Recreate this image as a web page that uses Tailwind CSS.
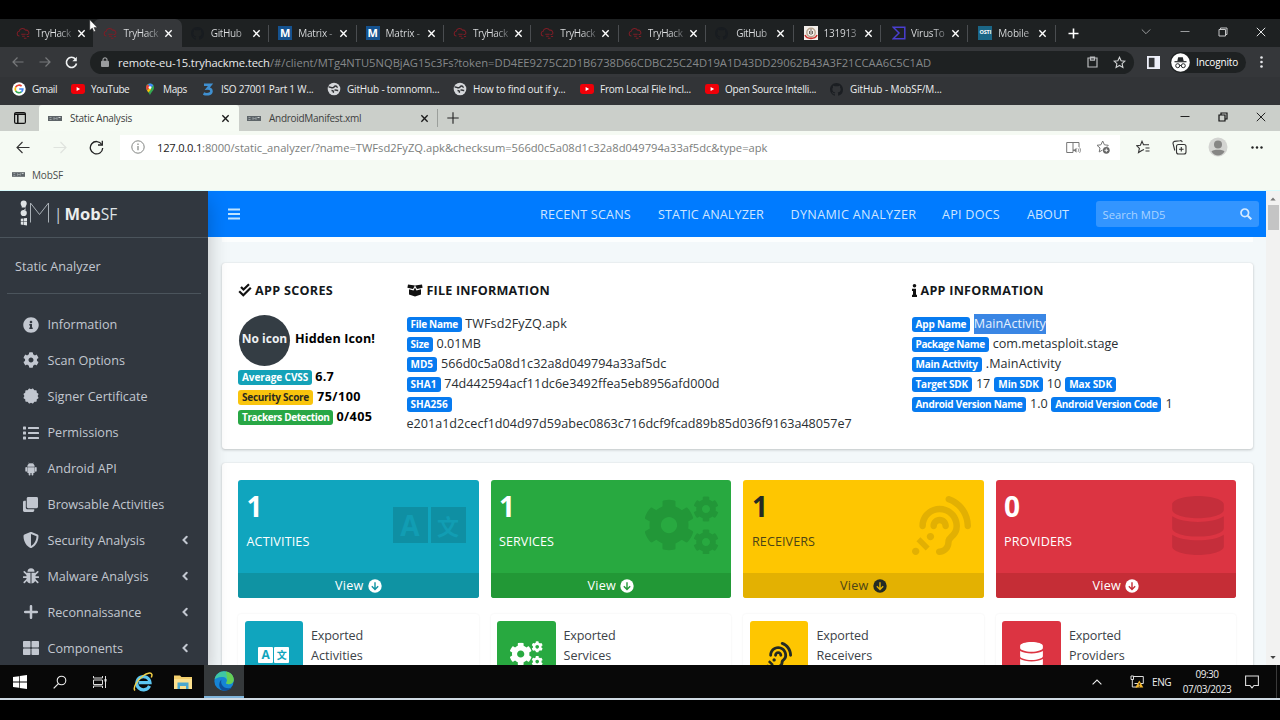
<!DOCTYPE html>
<html lang="en">
<head>
<meta charset="utf-8">
<title>Static Analysis</title>
<script src="https://cdn.jsdelivr.net/npm/@tailwindcss/browser@4"></script>
</head>
<body class="w-[1280px] h-[720px] overflow-hidden bg-black flex flex-col font-['Open_Sans','Noto_Sans',sans-serif] text-[12.6px] leading-[20px] whitespace-nowrap">
<svg class="hidden">
  <symbol id="thm" viewBox="0 0 16 14"><path d="M4 10.5H3.6A2.8 2.8 0 0 1 3.6 5 4 4 0 0 1 11 3.8a3.2 3.2 0 0 1 3.4 4.6M6 8.5h5M7 10.8h3M12 8.8h2M12.5 11h2.5M9 13h3" fill="none" stroke="#7d1d26" stroke-width="1.2"/></symbol>
  <symbol id="gh" viewBox="0 0 16 16"><path d="M8 0C3.58 0 0 3.58 0 8c0 3.54 2.29 6.53 5.47 7.59.4.07.55-.17.55-.38 0-.19-.01-.82-.01-1.49-2.01.37-2.53-.49-2.69-.94-.09-.23-.48-.94-.82-1.13-.28-.15-.68-.52-.01-.53.63-.01 1.08.58 1.23.82.72 1.21 1.87.87 2.33.66.07-.52.28-.87.51-1.07-1.78-.2-3.64-.89-3.64-3.95 0-.87.31-1.59.82-2.15-.08-.2-.36-1.02.08-2.12 0 0 .67-.21 2.2.82.64-.18 1.32-.27 2-.27s1.36.09 2 .27c1.53-1.04 2.2-.82 2.2-.82.44 1.1.16 1.92.08 2.12.51.56.82 1.27.82 2.15 0 3.07-1.87 3.75-3.65 3.95.29.25.54.73.54 1.48 0 1.07-.01 1.93-.01 2.2 0 .21.15.46.55.38A8.01 8.01 0 0 0 16 8c0-4.42-3.58-8-8-8z" fill="currentColor"/></symbol>
  <symbol id="x" viewBox="0 0 10 10"><path d="M1.5 1.5l7 7M8.5 1.5l-7 7" stroke="currentColor" stroke-width="1.5" fill="none"/></symbol>
  <symbol id="xthin" viewBox="0 0 10 10"><path d="M.8 .8l8.4 8.4M9.2 .8L.8 9.2" stroke="currentColor" stroke-width="1" fill="none"/></symbol>
  <symbol id="yt" viewBox="0 0 14 10"><rect width="14" height="10" rx="2.4" fill="#f00008"/><path d="M5.6 3l3.6 2-3.6 2z" fill="#fff"/></symbol>
  <symbol id="globe" viewBox="0 0 14 14"><circle cx="7" cy="7" r="6.3" fill="#d5d7da"/><path d="M1.5 5c1.500-.5 2.500.8 4 .8s1.500-1.600 3-1.800 1 1.400 2.200 1.200M7.500 8.200c1.300-.4 2.300.2 3.700.2M4.500 8.500c1.500 0 2.300.8 1.800 2.300" fill="none" stroke="#323437" stroke-width="1.500"/></symbol>
  <symbol id="msf" viewBox="0 0 14 5"><rect width="14" height="5" fill="#5d6468"/><path d="M1.500 1.500h2M1.500 3.500h2M6 3.800V1.500l1.500 1.500 1.500-1.500v2.300" stroke="#a9b0b2" stroke-width=".8" fill="none"/><path d="M10.500 1.500h2" stroke="#dfe4e4" stroke-width=".9"/></symbol>
  <symbol id="info" viewBox="0 0 512 512"><path fill="currentColor" d="M256 8C119.043 8 8 119.083 8 256c0 136.997 111.043 248 248 248s248-111.003 248-248C504 119.083 392.957 8 256 8zm0 110c23.196 0 42 18.804 42 42s-18.804 42-42 42-42-18.804-42-42 18.804-42 42-42zm56 254c0 6.627-5.373 12-12 12h-88c-6.627 0-12-5.373-12-12v-24c0-6.627 5.373-12 12-12h12v-64h-12c-6.627 0-12-5.373-12-12v-24c0-6.627 5.373-12 12-12h64c6.627 0 12 5.373 12 12v100h12c6.627 0 12 5.373 12 12v24z"/></symbol>
  <symbol id="cog" viewBox="0 0 512 512"><path fill="currentColor" d="M487.4 315.7l-42.6-24.6c4.3-23.2 4.3-47 0-70.2l42.6-24.6c4.9-2.8 7.1-8.6 5.5-14-11.1-35.6-30-67.8-54.7-94.6-3.8-4.1-10-5.1-14.8-2.3L380.8 110c-17.9-15.4-38.5-27.3-60.8-35.1V25.8c0-5.6-3.9-10.5-9.4-11.7-36.7-8.2-74.3-7.8-109.2 0-5.5 1.2-9.4 6.1-9.4 11.7V75c-22.2 7.9-42.8 19.8-60.8 35.1L88.7 85.500c-4.9-2.8-11-1.9-14.8 2.3-24.7 26.7-43.6 58.9-54.7 94.6-1.7 5.4.6 11.2 5.5 14L67.3 221c-4.3 23.2-4.3 47 0 70.2l-42.6 24.6c-4.9 2.8-7.1 8.600-5.500 14 11.1 35.6 30 67.8 54.7 94.6 3.8 4.1 10 5.1 14.8 2.3l42.6-24.6c17.9 15.4 38.5 27.3 60.8 35.1v49.2c0 5.6 3.9 10.5 9.4 11.7 36.7 8.2 74.3 7.8 109.2 0 5.500-1.2 9.400-6.1 9.400-11.700v-49.200c22.200-7.900 42.800-19.800 60.800-35.100l42.600 24.600c4.900 2.800 11 1.900 14.800-2.300 24.700-26.700 43.600-58.900 54.700-94.600 1.500-5.500-.7-11.300-5.600-14.100zM256 336c-44.100 0-80-35.900-80-80s35.900-80 80-80 80 35.900 80 80-35.900 80-80 80z"/></symbol>
  <symbol id="cert" viewBox="0 0 16 16"><g fill="currentColor"><rect x="2.300" y="2.300" width="11.400" height="11.400" rx=".8"/><rect x="2.300" y="2.300" width="11.400" height="11.400" rx=".8" transform="rotate(30 8 8)"/><rect x="2.300" y="2.300" width="11.400" height="11.400" rx=".8" transform="rotate(60 8 8)"/></g></symbol>
  <symbol id="list" viewBox="0 0 16 14"><g fill="currentColor"><rect y=".5" width="3" height="3" rx=".6"/><rect y="5.500" width="3" height="3" rx=".6"/><rect y="10.500" width="3" height="3" rx=".6"/><rect x="5" y="1" width="11" height="2" rx=".5"/><rect x="5" y="6" width="11" height="2" rx=".5"/><rect x="5" y="11" width="11" height="2" rx=".5"/></g></symbol>
  <symbol id="android" viewBox="0 0 14 16"><g fill="currentColor"><path d="M2.800 5.500a4.200 4.200 0 0 1 8.400 0z"/><path d="M2.800 5.900h8.400v5.800a1 1 0 0 1-1 1H3.800a1 1 0 0 1-1-1z"/><rect x=".5" y="5.800" width="2" height="5.200" rx="1"/><rect x="11.500" y="5.800" width="2" height="5.200" rx="1"/><rect x="4.300" y="11" width="2.100" height="4.400" rx="1"/><rect x="7.600" y="11" width="2.100" height="4.400" rx="1"/></g><path d="M4.300 .8l1 1.600M9.700 .8l-1 1.600" stroke="currentColor" stroke-width=".6"/></symbol>
  <symbol id="clone" viewBox="0 0 16 16"><g fill="currentColor"><rect x="4" y="0" width="12" height="12" rx="1.500"/><path d="M3 4H1.500A1.500 1.500 0 0 0 0 5.500v9A1.500 1.500 0 0 0 1.500 16h9a1.500 1.500 0 0 0 1.500-1.500V13H4.500A1.500 1.500 0 0 1 3 11.500z"/></g></symbol>
  <symbol id="shield" viewBox="0 0 512 512"><path fill="currentColor" d="M466.500 83.700l-192-80a48.150 48.150 0 0 0-36.900 0l-192 80C27.700 91.100 16 108.600 16 128c0 198.500 114.500 335.700 221.500 380.300 11.800 4.900 25.100 4.900 36.900 0C360.100 472.600 496 349.300 496 128c0-19.400-11.700-36.900-29.500-44.300zM256.100 446.300l-.1-381 175.900 73.300c-3.300 151.400-82.100 261.100-175.800 307.700z"/></symbol>
  <symbol id="bug" viewBox="0 0 16 16"><g fill="currentColor"><path d="M4.500 3.700a3.500 3.500 0 0 1 7 0z"/><path d="M3.500 4.700h4v10.800C4.800 15.300 3.500 13 3.500 11zM12.500 4.700h-4v10.800c2.700-.2 4-2.500 4-4.500z"/></g><path d="M4 6.500L1.300 3.800M12 6.500l2.700-2.700M.6 9.200h4M11.400 9.200h4M4.200 11.500l-2.900 2.800M11.800 11.500l2.900 2.800" stroke="currentColor" stroke-width="1.700" stroke-linecap="round"/></symbol>
  <symbol id="plus" viewBox="0 0 14 14"><path d="M7 1.200v11.600M1.200 7h11.600" stroke="currentColor" stroke-width="2.500" stroke-linecap="round"/></symbol>
  <symbol id="thl" viewBox="0 0 16 14"><g fill="currentColor"><rect width="7.500" height="6.500" rx=".8"/><rect x="8.500" width="7.500" height="6.500" rx=".8"/><rect y="7.500" width="7.500" height="6.500" rx=".8"/><rect x="8.500" y="7.500" width="7.500" height="6.500" rx=".8"/></g></symbol>
  <symbol id="chev" viewBox="0 0 6 10"><path d="M4.700 1.700L1.500 5l3.200 3.300" stroke="currentColor" stroke-width="2" fill="none" stroke-linecap="round"/></symbol>
  <symbol id="db" viewBox="0 0 448 512"><path fill="currentColor" d="M448 73.143v45.714C448 159.143 347.667 192 224 192S0 159.143 0 118.857V73.143C0 32.857 100.333 0 224 0s224 32.857 224 73.143zM448 176v102.857C448 319.143 347.667 352 224 352S0 319.143 0 278.857V176c48.125 33.143 136.208 48.572 224 48.572S399.874 209.143 448 176zm0 160v102.857C448 479.143 347.667 512 224 512S0 479.143 0 438.857V336c48.125 33.143 136.208 48.572 224 48.572S399.874 369.143 448 336z"/></symbol>
  <symbol id="ear" viewBox="0 0 512 512"><path fill="currentColor" d="M216 260c0 15.464-12.536 28-28 28s-28-12.536-28-28c0-44.112 35.888-80 80-80s80 35.888 80 80c0 15.464-12.536 28-28 28s-28-12.536-28-28c0-13.234-10.767-24-24-24s-24 10.766-24 24zm24-176c-97.047 0-176 78.951-176 176 0 15.464 12.536 28 28 28s28-12.536 28-28c0-66.168 53.832-120 120-120s120 53.832 120 120c0 75.164-71.009 70.311-71.997 143.622L288 404c0 28.673-23.327 52-52 52-15.464 0-28 12.536-28 28s12.536 28 28 28c59.475 0 107.876-48.328 108-107.774.595-34.428 72-48.240 72-144.226 0-97.049-78.952-176-176-176zm-80 236c-17.673 0-32 14.327-32 32s14.327 32 32 32 32-14.327 32-32-14.327-32-32-32zM32 448c-17.673 0-32 14.327-32 32s14.327 32 32 32 32-14.327 32-32-14.327-32-32-32zm480-187.993c0-1.518-.012-3.025-.045-4.531C510.076 140.525 436.157 38.470 327.994 1.511c-14.633-4.998-30.553 2.809-35.552 17.443-5 14.632 2.810 30.550 17.443 35.550C394.997 84.600 454.508 165.500 455.960 256.400c.027 1.202.040 2.404.040 3.607 0 15.464 12.536 28 28 28s28-12.536 28-28zM152.971 439.029l-80-80L39.030 392.970l80 80 33.941-33.941z"/></symbol>
  <symbol id="cogs" viewBox="0 0 74 58"><use href="#cog" x="-2" y="3" width="52" height="52"/><use href="#cog" x="48" y="0" width="26" height="26"/><use href="#cog" x="48" y="33" width="26" height="26"/></symbol>
</svg>

<div class="h-[19px] shrink-0"></div>

<!-- Chrome tab strip -->
<header class="h-[28px] shrink-0 bg-[#1e2122] flex items-stretch pl-[7px] text-[#d6d8da] text-[10px] tracking-[-0.4px] leading-[27px]">
  <div class="w-[86.400px] flex items-center pl-[9px]"><svg class="size-[14px]"><use href="#thm"/></svg><span class="w-[37px] ml-[6px] bg-gradient-to-r from-[#dfe1e3] from-60% to-[#4a4d50] bg-clip-text text-transparent">TryHack</span><svg class="size-[9px] ml-[4px] text-white"><use href="#x"/></svg></div>
  <div class="w-[88.400px] flex items-center pl-[10px] bg-[#35373a] rounded-t-[7px]"><svg class="size-[14px]"><use href="#thm"/></svg><span class="w-[37px] ml-[6px] bg-gradient-to-r from-[#dfe1e3] from-60% to-[#5a5d60] bg-clip-text text-transparent">TryHack</span><svg class="size-[9px] ml-[4px] text-white"><use href="#x"/></svg></div>
  <div class="w-[87.400px] flex items-center pl-[9px]"><svg class="size-[13px] mr-px text-[#181c20]"><use href="#gh"/></svg><span class="w-[37px] ml-[6px] bg-gradient-to-r from-[#dfe1e3] from-60% to-[#6e7072] bg-clip-text text-transparent">GitHub</span><svg class="size-[9px] ml-[4px] text-white"><use href="#x"/></svg><i class="ml-auto w-px h-[17px] bg-[#4a4d50]"></i></div>
  <div class="w-[87.400px] flex items-center pl-[9px]"><b class="size-[14px] bg-[#15528f] text-white text-[11px] leading-[14px] text-center tracking-normal">M</b><span class="w-[37px] ml-[6px] tracking-[-0.200px] bg-gradient-to-r from-[#dfe1e3] from-75% to-[#4a4d50] bg-clip-text text-transparent">Matrix -</span><svg class="size-[9px] ml-[4px] text-white"><use href="#x"/></svg><i class="ml-auto w-px h-[17px] bg-[#4a4d50]"></i></div>
  <div class="w-[87.400px] flex items-center pl-[9px]"><b class="size-[14px] bg-[#15528f] text-white text-[11px] leading-[14px] text-center tracking-normal">M</b><span class="w-[37px] ml-[6px] tracking-[-0.200px] bg-gradient-to-r from-[#dfe1e3] from-75% to-[#4a4d50] bg-clip-text text-transparent">Matrix -</span><svg class="size-[9px] ml-[4px] text-white"><use href="#x"/></svg><i class="ml-auto w-px h-[17px] bg-[#4a4d50]"></i></div>
  <div class="w-[87.400px] flex items-center pl-[9px]"><svg class="size-[14px]"><use href="#thm"/></svg><span class="w-[37px] ml-[6px] bg-gradient-to-r from-[#dfe1e3] from-60% to-[#4a4d50] bg-clip-text text-transparent">TryHack</span><svg class="size-[9px] ml-[4px] text-white"><use href="#x"/></svg><i class="ml-auto w-px h-[17px] bg-[#4a4d50]"></i></div>
  <div class="w-[87.400px] flex items-center pl-[9px]"><svg class="size-[14px]"><use href="#thm"/></svg><span class="w-[37px] ml-[6px] bg-gradient-to-r from-[#dfe1e3] from-60% to-[#4a4d50] bg-clip-text text-transparent">TryHack</span><svg class="size-[9px] ml-[4px] text-white"><use href="#x"/></svg><i class="ml-auto w-px h-[17px] bg-[#4a4d50]"></i></div>
  <div class="w-[87.400px] flex items-center pl-[9px]"><svg class="size-[14px]"><use href="#thm"/></svg><span class="w-[37px] ml-[6px] bg-gradient-to-r from-[#dfe1e3] from-60% to-[#4a4d50] bg-clip-text text-transparent">TryHack</span><svg class="size-[9px] ml-[4px] text-white"><use href="#x"/></svg><i class="ml-auto w-px h-[17px] bg-[#4a4d50]"></i></div>
  <div class="w-[87.400px] flex items-center pl-[9px]"><svg class="size-[13px] mr-px text-[#181c20]"><use href="#gh"/></svg><span class="w-[37px] ml-[7px] bg-gradient-to-r from-[#dfe1e3] from-60% to-[#6e7072] bg-clip-text text-transparent">GitHub</span><svg class="size-[9px] ml-[3px] text-white"><use href="#x"/></svg><i class="ml-auto w-px h-[17px] bg-[#4a4d50]"></i></div>
  <div class="w-[87.400px] flex items-center pl-[10px]"><svg class="size-[14px]" viewBox="0 0 14 14"><rect width="14" height="14" fill="#f3eeea"/><circle cx="7" cy="6.500" r="4.200" fill="none" stroke="#b8a58f" stroke-width="1.400"/><path d="M7 3v6M5.500 5v3M8.500 5v3" stroke="#6d665f"/><path d="M1 9c2 4.500 10 4.500 12 0" fill="none" stroke="#c8322e" stroke-width="1.600"/></svg><span class="w-[37px] ml-[6px] tracking-[-0.250px] bg-gradient-to-r from-[#dfe1e3] from-60% to-[#4a4d50] bg-clip-text text-transparent">131913</span><svg class="size-[9px] ml-[3px] text-white"><use href="#x"/></svg><i class="ml-auto w-px h-[17px] bg-[#4a4d50]"></i></div>
  <div class="w-[87.400px] flex items-center pl-[11px]"><svg class="size-[14px]" viewBox="0 0 14 14"><path d="M1.200 1.200h11.600v11.600H1.200L7 7z" fill="none" stroke="#4a3fd0" stroke-width="1.500"/></svg><span class="w-[37px] ml-[5px] tracking-[-0.200px] bg-gradient-to-r from-[#dfe1e3] from-60% to-[#4a4d50] bg-clip-text text-transparent">VirusTo</span><svg class="size-[9px] ml-[3px] text-white"><use href="#x"/></svg><i class="ml-auto w-px h-[17px] bg-[#4a4d50]"></i></div>
  <div class="w-[87.400px] flex items-center pl-[10px]"><b class="size-[14px] bg-[#1b6686] text-white text-[5.500px] leading-[13px] text-center tracking-[-0.200px]">OSTI</b><span class="w-[37px] ml-[6px] tracking-[-0.200px] bg-gradient-to-r from-[#dfe1e3] from-60% to-[#77797b] bg-clip-text text-transparent">Mobile</span><svg class="size-[9px] ml-[3px] text-white"><use href="#x"/></svg><i class="ml-auto w-px h-[17px] bg-[#4a4d50]"></i></div>
  <svg class="size-[11px] ml-[12.500px] mt-[8.500px]" viewBox="0 0 11 11"><path d="M5.500 .5v10M.5 5.500h10" stroke="#fff" stroke-width="1.600"/></svg>
  <div class="ml-auto flex pt-[8px] pr-[14px] text-[#e2e4e5]">
    <svg class="w-[10px] h-[9px]" viewBox="0 0 10 9"><path d="M.8 2.500L5 6.700l4.200-4.200" fill="none" stroke="#9a9c9e"/></svg>
    <svg class="w-[10px] h-[9px] ml-[29px]" viewBox="0 0 10 9"><path d="M.5 4.500h9" stroke="#9a9c9e"/></svg>
    <svg class="size-[10px] ml-[28px]" viewBox="0 0 10 10"><path d="M1 2.500h6.500v6.500H1zM2.500 2.500V1H9v6.500H7.500" fill="none" stroke="#c5c7c8"/></svg>
    <svg class="size-[10px] ml-[28px]"><use href="#xthin"/></svg>
  </div>
</header>

<!-- Chrome toolbar -->
<div class="h-[30px] shrink-0 bg-[#35373a] flex items-center">
  <svg class="w-[12px] h-[12px] ml-[12px]" viewBox="0 0 12 12"><path d="M11.500 6H1.200M5.500 1.500L1 6l4.500 4.500" fill="none" stroke="#77797b" stroke-width="1.200"/></svg>
  <svg class="w-[12px] h-[12px] ml-[15px]" viewBox="0 0 12 12"><path d="M.5 6h10.300M6.500 1.500L11 6l-4.500 4.500" fill="none" stroke="#77797b" stroke-width="1.200"/></svg>
  <svg class="size-[13px] ml-[14px]" viewBox="0 0 13 13"><path d="M10.500 3.200A5.100 5.100 0 1 0 11.500 7.500" fill="none" stroke="#f1f3f4" stroke-width="1.600"/><path d="M11.800 .8v4.400H7.400z" fill="#f1f3f4"/></svg>
  <div class="ml-[12px] w-[1044px] h-[23px] rounded-full bg-[#1e2122] flex items-center pl-[11px] text-[11.200px] leading-[23px] text-[#85888a]">
    <svg class="w-[8px] h-[10px]" viewBox="0 0 8 10"><rect y="3.800" width="8" height="6.200" rx="1" fill="#9a9c9e"/><path d="M2 4V2.800a2 2 0 0 1 4 0V4" fill="none" stroke="#9a9c9e" stroke-width="1.200"/></svg>
    <span class="ml-[9px] w-[152px] tracking-[-0.110px] text-[#e9eaeb]">remote-eu-15.tryhackme.tech</span><span>/#/client/MTg4NTU5NQBjAG15c3Fs?token=DD4EE9275C2D1B6738D66CDBC25C24D19A1D43DD29062B43A3F21CCAA6C5C1AD</span>
    <svg class="ml-auto w-[11px] h-[12px]" viewBox="0 0 11 12"><path d="M1 2h9v9H1zM3.500 4.200h4V1.200h-4z" fill="none" stroke="#b9bbbd" stroke-width="1.200"/></svg>
    <svg class="ml-[15px] mr-[8px] size-[13px]" viewBox="0 0 13 13"><path d="M6.500 1.200l1.600 3.500 3.800.4-2.800 2.600.8 3.800-3.400-2-3.400 2 .8-3.800L1.100 5.100l3.800-.4z" fill="none" stroke="#d2d4d5" stroke-width="1.100"/></svg>
  </div>
  <svg class="ml-[13px] size-[13px]" viewBox="0 0 13 13"><rect x=".9" y=".9" width="11.200" height="11.200" fill="#35373a" stroke="#eef0fa" stroke-width="1.800"/><rect x="7.500" y="1" width="5" height="11" fill="#eef0fa"/></svg>
  <div class="ml-[10px] w-[76px] h-[21px] rounded-full bg-[#1e2122] flex items-center text-[10px] leading-[20px] tracking-[-0.150px] text-white">
    <svg class="size-[19px] ml-[1px]" viewBox="0 0 19 19"><circle cx="9.500" cy="9.500" r="9.300" fill="#fff"/><path d="M6.300 8l.9-3.800h4.600l.9 3.800z" fill="#25282a"/><path d="M3.500 8.700h12" stroke="#25282a" stroke-width="1.200"/><circle cx="6.700" cy="12.700" r="2" fill="none" stroke="#25282a"/><circle cx="12.300" cy="12.700" r="2" fill="none" stroke="#25282a"/><path d="M8.500 12.500h2" stroke="#25282a"/></svg>
    <span class="ml-[6px]">Incognito</span>
  </div>
  <svg class="ml-[14px] w-[3px] h-[12px]" viewBox="0 0 3 12"><g fill="#e8eaed"><circle cx="1.500" cy="1.500" r="1.300"/><circle cx="1.500" cy="6" r="1.300"/><circle cx="1.500" cy="10.500" r="1.300"/></g></svg>
</div>

<!-- Chrome bookmarks -->
<div class="h-[28px] shrink-0 bg-[#323437] text-[10px] leading-[26px] tracking-[-0.170px] text-[#eceeef] pl-[12px] flex items-center pb-[4px]">
  <div class="w-[59px] flex items-center gap-[6px]"><svg class="size-[14px]" viewBox="0 0 14 14"><circle cx="7" cy="7" r="6.700" fill="#fff"/><g fill="none" stroke-width="1.700"><path d="M9.600 4.200A3.800 3.800 0 0 0 3.700 5.200" stroke="#ea4335"/><path d="M3.700 5.200a3.800 3.800 0 0 0 0 3.600" stroke="#fbbc05"/><path d="M3.700 8.800a3.800 3.800 0 0 0 5.700 1.100" stroke="#34a853"/><path d="M9.400 9.900A3.800 3.800 0 0 0 10.800 7H7.200" stroke="#4285f4"/></g></svg><span class="tracking-[-0.420px]">Gmail</span></div>
  <div class="w-[72px] flex items-center gap-[6px]"><svg class="w-[14px] h-[10px]"><use href="#yt"/></svg><span class="tracking-[-0.400px]">YouTube</span></div>
  <div class="w-[58px] flex items-center gap-[6px]"><svg class="w-[14px] h-[13px]" viewBox="0 0 14 13"><path d="M7 12.500C6.400 9.500 3 8 3 4.600a4 4 0 0 1 8 0C11 8 7.600 9.500 7 12.500z" fill="#34a853"/><path d="M3 4.600A4 4 0 0 1 5.200 1L7 4.600 4 7.500C3.400 6.600 3 5.700 3 4.600z" fill="#ea4335"/><path d="M5 1.200A4 4 0 0 1 10.300 2.400L7.600 5z" fill="#4285f4"/><path d="M4 7.500l3.400-3 .6 2L5.400 9.600z" fill="#fbbc05"/><circle cx="7" cy="4.600" r="1.400" fill="#fff"/></svg><span class="tracking-[-0.350px]">Maps</span></div>
  <div class="w-[126px] flex items-center gap-[6px]"><svg class="w-[14px] h-[13px]" viewBox="0 0 14 13"><path d="M3 1.700h6.500L6.500 5.500C9.300 5.300 10.700 6.800 10.400 8.700 10 11.300 5.500 12 2.500 10.500" fill="none" stroke="#3f8fd0" stroke-width="2.600"/></svg><span class="tracking-[-0.220px]">ISO 27001 Part 1 W...</span></div>
  <div class="w-[126px] flex items-center gap-[6px]"><svg class="size-[14px]"><use href="#globe"/></svg><span>GitHub - tomnomn...</span></div>
  <div class="w-[127px] flex items-center gap-[6px]"><svg class="size-[14px]"><use href="#globe"/></svg><span>How to find out if y...</span></div>
  <div class="w-[125px] flex items-center gap-[6px]"><svg class="w-[14px] h-[10px]"><use href="#yt"/></svg><span class="tracking-[-0.240px]">From Local File Incl...</span></div>
  <div class="w-[125px] flex items-center gap-[6px]"><svg class="w-[14px] h-[10px]"><use href="#yt"/></svg><span class="tracking-[-0.240px]">Open Source Intelli...</span></div>
  <div class="flex items-center gap-[6px]"><svg class="size-[13px] mr-px text-[#1b1e22]"><use href="#gh"/></svg><span class="tracking-[-0.100px]">GitHub - MobSF/M...</span></div>
</div>

<!-- Edge tab strip -->
<div class="h-[26px] shrink-0 bg-[#cbcfca] flex text-[10px] leading-[26px] text-[#3d403e]">
  <div class="w-[39px] flex items-center justify-center"><svg class="size-[12px]" viewBox="0 0 12 12"><rect x=".6" y=".6" width="10.800" height="10.800" rx="1.500" fill="none" stroke="#111" stroke-width="1.200"/><path d="M.6 2.200h10.800M3.800 3v8.500" stroke="#111" stroke-width="1.500"/></svg></div>
  <div class="w-[200px] bg-[#f6fbf4] rounded-t-[3px] flex items-center pl-[9px] pr-[9px]"><svg class="w-[14px] h-[5px]"><use href="#msf"/></svg><span class="ml-[8px] tracking-[-0.250px]">Static Analysis</span><svg class="size-[9px] ml-auto text-[#1a1a1a]"><use href="#x"/></svg></div>
  <div class="w-[199px] flex items-center pl-[8px] pr-[8px] border-r border-[#9b9f9b] my-[4px] leading-[18px]"><svg class="w-[14px] h-[5px]"><use href="#msf"/></svg><span class="ml-[8px] tracking-[-0.280px]">AndroidManifest.xml</span><svg class="size-[9px] ml-auto text-[#1a1a1a]"><use href="#x"/></svg></div>
  <svg class="size-[12px] ml-[9px] mt-[7px]" viewBox="0 0 12 12"><path d="M6 .3v11.400M.3 6h11.400" stroke="#222" stroke-width="1.100"/></svg>
  <div class="ml-auto flex pt-[7px] pr-[14px] text-[#222]">
    <svg class="w-[10px] h-[9px]" viewBox="0 0 10 9"><path d="M.5 4.500h9" stroke="#222"/></svg>
    <svg class="size-[10px] ml-[28px]" viewBox="0 0 10 10"><path d="M1 3h6v6H1zM3 3V1h6v6H7" fill="none" stroke="#111" stroke-width="1.200"/></svg>
    <svg class="size-[10px] ml-[28px]"><use href="#xthin"/></svg>
  </div>
</div>

<!-- Edge toolbar -->
<div class="h-[31px] shrink-0 bg-[#f5faf3] flex items-center pt-[1px]">
  <svg class="w-[14px] h-[13px] ml-[16px]" viewBox="0 0 14 13"><path d="M13.500 6.500H1M6.500 1L1 6.500 6.500 12" fill="none" stroke="#333" stroke-width="1.100"/></svg>
  <svg class="w-[14px] h-[13px] ml-[23px]" viewBox="0 0 14 13"><path d="M.5 6.500H13M7.500 1L13 6.500 7.500 12" fill="none" stroke="#dfe3de" stroke-width="1.100"/></svg>
  <svg class="size-[15px] ml-[22px]" viewBox="0 0 15 15"><path d="M12.800 4.500A6.200 6.200 0 1 0 13.700 8" fill="none" stroke="#222" stroke-width="1.300"/><path d="M13.300 .8v4.200H9" fill="none" stroke="#222" stroke-width="1.300"/></svg>
  <div class="ml-[16px] w-[1000px] h-[25px] bg-white flex items-center pl-[11px] text-[11.200px] leading-[25px] text-[#7b7e7c]">
    <svg class="size-[14px]" viewBox="0 0 14 14"><circle cx="7" cy="7" r="6.200" fill="none" stroke="#828583"/><path d="M7 6v4.300M7 3.500v1.400" stroke="#828583" stroke-width="1.200"/></svg>
    <span class="ml-[12px] w-[45px] tracking-[-0.240px] text-[#222]">127.0.0.1</span><span class="tracking-[-0.010px]">:8000/static_analyzer/?name=TWFsd2FyZQ.apk&amp;checksum=566d0c5a08d1c32a8d049794a33af5dc&amp;type=apk</span>
    <svg class="ml-auto w-[15px] h-[13px]" viewBox="0 0 15 13"><path d="M7 11.500H.7v-10H7zM7 1.500h6v4.500" fill="none" stroke="#777"/><path d="M7 8.500h1.500l2-1.800v5l-2-1.700H7z" fill="#777"/><path d="M12 7.500c.9 1 .9 2.400 0 3.400M13.500 6.500c1.300 1.600 1.300 3.800 0 5.400" fill="none" stroke="#777" stroke-width=".8"/></svg>
    <svg class="ml-[15px] mr-[10px] size-[14px]" viewBox="0 0 14 14"><path d="M6.500 10L3.200 12l.8-4L1 5.300l3.900-.5L6.700 1l1.700 3.800 3.900.5-1.500 1.500" fill="none" stroke="#777"/><circle cx="10.300" cy="10.300" r="3.400" fill="#666"/><path d="M10.300 8.500v3.600M8.500 10.300h3.600" stroke="#fff" stroke-width=".9"/></svg>
  </div>
  <svg class="ml-[16px] w-[14px] h-[14px]" viewBox="0 0 14 14"><path d="M8 9.500L5.800 10.500 2.500 12.500l.9-4.100L.7 5.700l3.700-.5L6 1.300l1.500 3.500H13M9.500 8H13.500M9.500 11h4" fill="none" stroke="#333" stroke-width="1.100"/></svg>
  <svg class="ml-[22px] w-[15px] h-[15px]" viewBox="0 0 15 15"><rect x="4.500" y="4.500" width="9.500" height="9.500" rx="2" fill="none" stroke="#333" stroke-width="1.100"/><path d="M9.300 7v4.600M7 9.300h4.600M2.800 10.500L1 3.500A2 2 0 0 1 2.300 1.400L8 .7a2 2 0 0 1 2.300 1.500" fill="none" stroke="#333" stroke-width="1.100"/></svg>
  <svg class="ml-[21px] size-[20px]" viewBox="0 0 20 20"><circle cx="10" cy="10" r="9.500" fill="#d3d4d1"/><circle cx="10" cy="7.500" r="4" fill="#868684"/><path d="M3.500 14.500c1-2.200 12-2.200 13 0-1.500 2.600-4 4-6.500 4s-5-1.400-6.500-4z" fill="#868684"/></svg>
  <svg class="ml-[23px] w-[12px] h-[3px]" viewBox="0 0 12 3"><g fill="#222"><circle cx="1.500" cy="1.500" r="1.200"/><circle cx="6" cy="1.500" r="1.200"/><circle cx="10.500" cy="1.500" r="1.200"/></g></svg>
</div>
<div class="h-[29px] shrink-0 bg-[#f5faf3] border-b border-[#d8fbfd] flex items-center pl-[12px] text-[10px] leading-[24px] pb-[3px] text-[#4a4d4b]"><svg class="w-[13px] h-[5px]"><use href="#msf"/></svg><span class="ml-[7px] tracking-[-0.150px]">MobSF</span></div>

<!-- Page -->
<div class="h-[474px] shrink-0 flex overflow-hidden">
  <aside class="w-[208px] bg-[#31373f] text-[#c2c7d0] z-10 shadow-[0_10px_20px_rgba(0,0,0,0.24)]">
    <div class="h-[47px] border-b border-[#4b545c] flex items-center pl-[20px] text-[15.500px]">
      <svg class="w-[29px] h-[26px] mb-[2px]" viewBox="0 0 29 26"><g fill="#dfe3e6"><circle cx="3.700" cy="3.600" r="3"/><rect x="1.700" y="3" width="4" height="4.500"/><circle cx="3.700" cy="13" r="3.100"/><path d="M4 10l1.500-2v2z"/><path d="M.8 18.800l2.700-.4v3H.8zM4 18.300l3-.4v3.500H4zM.8 22h2.700v3l-2.700-.4zM4 22h3v3.500l-3-.4z"/></g><path d="M10.500 22.500V3l9 11.500 9-11.500v19.500" fill="none" stroke="#a9b0b6" stroke-width="1"/></svg>
      <span class="ml-[4.500px] text-[17px] leading-[20px] w-[11px]">|</span><span class="text-[#dfe3e6]"><b class="text-[16.500px] text-[#eceeed]">Mob</b>SF</span>
    </div>
    <div class="h-[56px] leading-[58px] mx-[7px] pl-[8px] border-b border-[#4b545c]">Static Analyzer</div>
    <nav class="pt-[13px]">
      <a class="h-[36px] flex items-center"><svg class="size-[16px] ml-[23px] mr-[8.500px] mb-px"><use href="#info"/></svg>Information</a>
      <a class="h-[36px] flex items-center"><svg class="size-[16px] ml-[23px] mr-[8.500px] mb-[2px]"><use href="#cog"/></svg>Scan Options</a>
      <a class="h-[36px] flex items-center"><svg class="size-[16px] ml-[23px] mr-[8.500px] mb-[2px]"><use href="#cert"/></svg>Signer Certificate</a>
      <a class="h-[36px] flex items-center"><svg class="w-[16px] h-[14px] ml-[23px] mr-[8.500px] mb-px"><use href="#list"/></svg>Permissions</a>
      <a class="h-[36px] flex items-center"><svg class="w-[16px] h-[14px] ml-[23px] mr-[8.500px] mb-px"><use href="#android"/></svg>Android API</a>
      <a class="h-[36px] flex items-center"><svg class="size-[15px] ml-[23px] mr-[9.500px] mb-[2px]"><use href="#clone"/></svg>Browsable Activities</a>
      <a class="h-[36px] flex items-center"><svg class="size-[16px] ml-[23px] mr-[8.500px] mb-[2px]"><use href="#shield"/></svg>Security Analysis<svg class="w-[6px] h-[10px] ml-auto mr-[20px] mb-[2px]"><use href="#chev"/></svg></a>
      <a class="h-[36px] flex items-center"><svg class="size-[16px] ml-[23px] mr-[8.500px] mb-[2px]"><use href="#bug"/></svg>Malware Analysis<svg class="w-[6px] h-[10px] ml-auto mr-[20px] mb-[2px]"><use href="#chev"/></svg></a>
      <a class="h-[36px] flex items-center"><svg class="size-[14px] ml-[24px] mr-[9.500px] mb-[2px]"><use href="#plus"/></svg>Reconnaissance<svg class="w-[6px] h-[10px] ml-auto mr-[20px] mb-[2px]"><use href="#chev"/></svg></a>
      <a class="h-[36px] flex items-center"><svg class="w-[16px] h-[14px] ml-[23px] mr-[8.500px] mb-[2px]"><use href="#thl"/></svg>Components<svg class="w-[6px] h-[10px] ml-auto mr-[20px] mb-[2px]"><use href="#chev"/></svg></a>
    </nav>
  </aside>

  <main class="w-[1058px] bg-[#f3f8fa]">
    <div class="h-[46px] bg-[#007bff] flex items-center text-[#cfe6ff] pl-[20px] leading-[22px]">
      <svg class="w-[12px] h-[12px]" viewBox="0 0 12 12"><path d="M0 1.500h12M0 6h12M0 10.500h12" stroke="#bfe4ff" stroke-width="2"/></svg>
      <span class="ml-[300px] pt-px w-[118px] tracking-[0.200px]">RECENT SCANS</span><span class="pt-px w-[132.500px] tracking-[0.100px]">STATIC ANALYZER</span><span class="pt-px w-[151.500px] tracking-[0.330px]">DYNAMIC ANALYZER</span><span class="pt-px w-[85px] tracking-[0.240px]">API DOCS</span><span class="pt-px w-[69px]">ABOUT</span>
      <div class="w-[163px] h-[26px] rounded-[3px] bg-[#3395ff] flex items-center justify-between pl-[6.500px] pr-[7px] text-[11.200px] text-[#a9d3ff]"><span class="pt-px">Search MD5</span><svg class="size-[12px]" viewBox="0 0 12 12"><circle cx="4.800" cy="4.800" r="3.800" fill="none" stroke="#d5eaff" stroke-width="1.700"/><path d="M7.700 7.700l3.600 3.600" stroke="#d5eaff" stroke-width="2"/></svg></div>
    </div>
    <div class="ml-[14px] w-[1031px] h-[5px] bg-[#fcfefe]"></div>

    <section class="ml-[14px] mt-[21px] w-[1031px] h-[186px] rounded-[3px] bg-white shadow-[0_0_1px_rgba(0,0,0,0.13),0_1px_3px_rgba(0,0,0,0.2)] flex pl-[16px] pt-[18px] text-[#2a2f33]">
      <div class="w-[168.500px] text-black font-bold">
        <h2 class="flex items-center tracking-[0.290px] text-[#14181b]"><svg class="size-[14px] mr-[3px] mb-[2px]" viewBox="0 0 14 14"><path d="M3 4l2.500 2.500L11 1.200M1.200 8.200L5.300 12.200 12.800 4.800" fill="none" stroke="#111" stroke-width="2.200"/></svg>APP SCORES</h2>
        <div class="mt-[13px] flex items-center h-[52px]"><div class="ml-px size-[51px] rounded-full bg-[#343d44] text-[#eef1f3] text-[12px] leading-[47px] text-center">No icon</div><span class="ml-[5px] pb-[3px] tracking-[0.110px]">Hidden Icon!</span></div>
        <div class="mt-px flex items-center h-[20px]"><span class="h-[15px] mt-px px-[4px] rounded-[3px] bg-[#14a2b8] text-white text-[10px] leading-[15px] tracking-[-0.080px]">Average CVSS</span><span class="ml-[3px] tracking-[0.300px]">6.7</span></div>
        <div class="flex items-center h-[20px]"><span class="h-[15px] mt-px px-[4px] rounded-[3px] bg-[#f9c40d] text-[#2b2a20] text-[10px] leading-[15px] tracking-[-0.260px]">Security Score</span><span class="ml-[4px] tracking-[0.470px]">75/100</span></div>
        <div class="flex items-center h-[20px]"><span class="h-[15px] mt-px px-[4px] rounded-[3px] bg-[#28a745] text-white text-[10px] leading-[15px] tracking-[-0.400px]">Trackers Detection</span><span class="ml-[3px] tracking-[0.400px]">0/405</span></div>
      </div>
      <div class="w-[505px]">
        <h2 class="flex items-center font-bold text-[#14181b] tracking-[0.180px] mb-[13px]"><svg class="w-[16px] h-[13px] mr-[4px] mb-px" viewBox="0 0 16 13"><g fill="#111"><path d="M1 .5L8 1.400 6 5 .4 3.700zM15 .5L8 1.400 10 5l5.600-1.300z"/><path d="M2 5.200l4.500 1.200L8 3.500l1.500 2.900L14 5.200v5.300L8 12.500 2 10.500z"/></g></svg>FILE INFORMATION</h2>
        <div class="flex items-center h-[20px]"><span class="h-[15px] px-[4px] rounded-[3px] bg-[#077bf0] text-white font-bold text-[10px] leading-[15px] tracking-[-0.300px]">File Name</span><span class="ml-[3.500px] tracking-[0.080px]">TWFsd2FyZQ.apk</span></div>
        <div class="flex items-center h-[20px]"><span class="h-[15px] px-[4px] rounded-[3px] bg-[#077bf0] text-white font-bold text-[10px] leading-[15px] tracking-[-0.200px]">Size</span><span class="ml-[3.500px]">0.01MB</span></div>
        <div class="flex items-center h-[20px]"><span class="h-[15px] px-[4px] rounded-[3px] bg-[#077bf0] text-white font-bold text-[10px] leading-[15px]">MD5</span><span class="ml-[4px]">566d0c5a08d1c32a8d049794a33af5dc</span></div>
        <div class="flex items-center h-[20px]"><span class="h-[15px] px-[4px] rounded-[3px] bg-[#077bf0] text-white font-bold text-[10px] leading-[15px] tracking-[0.100px]">SHA1</span><span class="ml-[3.500px]">74d442594acf11dc6e3492ffea5eb8956afd000d</span></div>
        <div class="flex items-center h-[20px]"><span class="h-[15px] px-[4px] rounded-[3px] bg-[#077bf0] text-white font-bold text-[10px] leading-[15px]">SHA256</span></div>
        <div class="h-[20px]">e201a1d2cecf1d04d97d59abec0863c716dcf9fcad89b85d036f9163a48057e7</div>
      </div>
      <div>
        <h2 class="flex items-center font-bold text-[#14181b] tracking-[0.240px] mb-[13px]"><svg class="w-[5px] h-[13px] mr-[4px] mb-px" viewBox="0 0 5 13"><circle cx="2.500" cy="1.800" r="1.800" fill="#111"/><path d="M0 4.800h4v6h1V13H0v-2.200h1V7H0z" fill="#111"/></svg>APP INFORMATION</h2>
        <div class="flex items-center h-[20px]"><span class="h-[15px] px-[4px] rounded-[3px] bg-[#077bf0] text-white font-bold text-[10px] leading-[15px] tracking-[-0.150px]">App Name</span><span class="ml-[3.500px] bg-[#3a86e4] text-[#e6f1ff] tracking-[0.070px]">MainActivity</span></div>
        <div class="flex items-center h-[20px]"><span class="h-[15px] px-[4px] rounded-[3px] bg-[#077bf0] text-white font-bold text-[10px] leading-[15px] tracking-[-0.380px]">Package Name</span><span class="ml-[4px]">com.metasploit.stage</span></div>
        <div class="flex items-center h-[20px]"><span class="h-[15px] px-[4px] rounded-[3px] bg-[#077bf0] text-white font-bold text-[10px] leading-[15px] tracking-[-0.280px]">Main Activity</span><span class="ml-[4px] tracking-[0.070px]">.MainActivity</span></div>
        <div class="flex items-center h-[20px]"><span class="h-[15px] px-[4px] rounded-[3px] bg-[#077bf0] text-white font-bold text-[10px] leading-[15px] tracking-[-0.200px]">Target SDK</span><span class="mx-[4px]">17</span><span class="h-[15px] px-[4px] rounded-[3px] bg-[#077bf0] text-white font-bold text-[10px] leading-[15px] tracking-[-0.100px]">Min SDK</span><span class="mx-[4px]">10</span><span class="h-[15px] px-[4px] rounded-[3px] bg-[#077bf0] text-white font-bold text-[10px] leading-[15px] tracking-[-0.100px]">Max SDK</span></div>
        <div class="flex items-center h-[20px]"><span class="h-[15px] px-[4px] rounded-[3px] bg-[#077bf0] text-white font-bold text-[10px] leading-[15px] tracking-[-0.290px]">Android Version Name</span><span class="mx-[3.500px]">1.0</span><span class="h-[15px] px-[4px] rounded-[3px] bg-[#077bf0] text-white font-bold text-[10px] leading-[15px] tracking-[-0.270px]">Android Version Code</span><span class="mx-[4px]">1</span></div>
      </div>
    </section>

    <section class="ml-[14px] mt-[14px] w-[1031px] h-[300px] rounded-[3px] bg-white shadow-[0_0_1px_rgba(0,0,0,0.13),0_1px_3px_rgba(0,0,0,0.2)] px-[16px] pt-[17px]">
      <div class="grid grid-cols-[240.500px_240.500px_240.500px_240.500px] gap-x-[12px]">
        <div class="relative h-[118px] rounded-[3px] overflow-hidden bg-[#10a5be] text-white flex flex-col">
          <b class="block text-[28px] leading-[28px] pl-[8.500px] pt-[12px]">1</b><span class="pl-[8.500px] mt-[12px] tracking-[0.130px]">ACTIVITIES</span>
          <div class="absolute right-[13px] top-[27px] flex gap-[3px] text-[28px] leading-[36px] text-center font-bold [&>span]:w-[35px] [&>span]:h-[36px] [&>span]:bg-[#0f8fa3] text-[#119db3]"><span>A</span><span class="text-[22px] font-['Noto_Sans_CJK_SC',sans-serif]">文</span></div>
          <div class="mt-auto h-[25px] bg-[#0f93a3] flex items-center justify-center gap-[4px] tracking-[0.250px]">View<svg class="size-[14px]" viewBox="0 0 14 14"><circle cx="7" cy="7" r="6.700" fill="#fff"/><path d="M7 3.200v7M3.800 7.200L7 10.400l3.200-3.200" fill="none" stroke="#0f93a3" stroke-width="1.400"/></svg></div>
        </div>
        <div class="relative h-[118px] rounded-[3px] overflow-hidden bg-[#28a940] text-white flex flex-col">
          <b class="block text-[28px] leading-[28px] pl-[8.500px] pt-[12px]">1</b><span class="pl-[8.500px] mt-[12px] tracking-[0.060px]">SERVICES</span>
          <svg class="absolute right-[12px] top-[16px] w-[74px] h-[58px] text-[#229738]"><use href="#cogs"/></svg>
          <div class="mt-auto h-[25px] bg-[#229836] flex items-center justify-center gap-[4px] tracking-[0.250px]">View<svg class="size-[14px]" viewBox="0 0 14 14"><circle cx="7" cy="7" r="6.700" fill="#fff"/><path d="M7 3.200v7M3.800 7.200L7 10.400l3.200-3.200" fill="none" stroke="#229836" stroke-width="1.400"/></svg></div>
        </div>
        <div class="relative h-[118px] rounded-[3px] overflow-hidden bg-[#fec601] text-[#232a24] flex flex-col">
          <b class="block text-[28px] leading-[28px] pl-[9px] pt-[12px]">1</b><span class="pl-[9px] mt-[12px] tracking-[0.070px] text-[#4b4416]">RECEIVERS</span>
          <svg class="absolute right-[12.500px] top-[16px] size-[59px] text-[#e2b003]"><use href="#ear"/></svg>
          <div class="mt-auto h-[25px] bg-[#e3b102] flex items-center justify-center gap-[4px] tracking-[0.250px] text-[#4b4416]">View<svg class="size-[14px]" viewBox="0 0 14 14"><circle cx="7" cy="7" r="6.700" fill="#232a24"/><path d="M7 3.200v7M3.800 7.200L7 10.400l3.200-3.200" fill="none" stroke="#e3b102" stroke-width="1.400"/></svg></div>
        </div>
        <div class="relative h-[118px] rounded-[3px] overflow-hidden bg-[#dc3442] text-white flex flex-col">
          <b class="block text-[28px] leading-[28px] pl-[8.500px] pt-[12px]">0</b><span class="pl-[8.500px] mt-[12px] tracking-[0.110px]">PROVIDERS</span>
          <svg class="absolute right-[12px] top-[16px] w-[52px] h-[59px] text-[#c52e3b]"><use href="#db"/></svg>
          <div class="mt-auto h-[25px] bg-[#c52d36] flex items-center justify-center gap-[4px] tracking-[0.250px]">View<svg class="size-[14px]" viewBox="0 0 14 14"><circle cx="7" cy="7" r="6.700" fill="#fff"/><path d="M7 3.200v7M3.800 7.200L7 10.400l3.200-3.200" fill="none" stroke="#c52d36" stroke-width="1.400"/></svg></div>
        </div>
      </div>
      <div class="mt-[16px] grid grid-cols-[240.500px_240.500px_240.500px_240.500px] gap-x-[12px] text-[#3c4248]">
        <div class="h-[80px] rounded-[3px] shadow-[0_0_2px_rgba(0,0,0,0.08)] flex pl-[6.500px] pt-[7px]">
          <div class="w-[58.500px] h-[60px] rounded-[3px] bg-[#10a5be] flex justify-center pt-[26px]"><div class="flex gap-[1px] text-[12px] leading-[16px] text-center font-bold text-[#10a5be] [&>span]:w-[15px] [&>span]:h-[16px] [&>span]:bg-white [&>span]:rounded-[1px]"><span>A</span><span class="text-[10px] font-['Noto_Sans_CJK_SC',sans-serif]">文</span></div></div>
          <div class="ml-[8px] mt-[5px]"><p class="tracking-[-0.160px]">Exported</p><p>Activities</p></div>
        </div>
        <div class="h-[80px] rounded-[3px] shadow-[0_0_2px_rgba(0,0,0,0.08)] flex pl-[6.500px] pt-[7px]">
          <div class="w-[58.500px] h-[60px] rounded-[3px] bg-[#28a940] flex justify-center pt-[20px]"><svg class="w-[33px] h-[26px] text-white"><use href="#cogs"/></svg></div>
          <div class="ml-[8px] mt-[5px]"><p class="tracking-[-0.160px]">Exported</p><p>Services</p></div>
        </div>
        <div class="h-[80px] rounded-[3px] shadow-[0_0_2px_rgba(0,0,0,0.08)] flex pl-[6.500px] pt-[7px]">
          <div class="w-[58.500px] h-[60px] rounded-[3px] bg-[#fec601] flex justify-center pt-[21px]"><svg class="size-[26px] text-[#232a24]"><use href="#ear"/></svg></div>
          <div class="ml-[8.500px] mt-[5px]"><p class="tracking-[-0.160px]">Exported</p><p>Receivers</p></div>
        </div>
        <div class="h-[80px] rounded-[3px] shadow-[0_0_2px_rgba(0,0,0,0.08)] flex pl-[6.500px] pt-[7px]">
          <div class="w-[58.500px] h-[60px] rounded-[3px] bg-[#dc3442] flex justify-center pt-[21px]"><svg class="w-[23px] h-[26px] text-white"><use href="#db"/></svg></div>
          <div class="ml-[8.500px] mt-[5px]"><p class="tracking-[-0.160px]">Exported</p><p>Providers</p></div>
        </div>
      </div>
    </section>
  </main>

  <!-- Scrollbar -->
  <div class="w-[14px] bg-[#f2f2f1] flex flex-col items-center justify-between">
    <div class="flex flex-col items-center"><svg class="w-[6px] h-[14px]" viewBox="0 0 6 14"><path d="M.3 9.500L3 6.500l2.700 3z" fill="#777"/></svg><div class="w-[11px] h-[25px] bg-[#c4c4c4]"></div></div>
    <svg class="w-[6px] h-[14px]" viewBox="0 0 6 14"><path d="M.3 5L3 8l2.700-3z" fill="#444"/></svg>
  </div>
</div>

<!-- Taskbar -->
<div class="h-[33px] shrink-0 bg-[#080808] flex items-center text-[#eee] text-[10px]">
  <svg class="size-[14px] ml-[13px]" viewBox="0 0 14 14"><path d="M0 2l6-.8v5.400H0zM6.700 1.100L14 0v6.600H6.700zM0 7.400h6v5.400L0 12zM6.700 7.400H14V14l-7.300-1z" fill="#fff"/></svg>
  <svg class="size-[14px] ml-[26px]" viewBox="0 0 14 14"><circle cx="8.500" cy="5.500" r="4.300" fill="none" stroke="#eee" stroke-width="1.100"/><path d="M5.400 8.600L.7 13.300" stroke="#eee" stroke-width="1.200"/></svg>
  <svg class="size-[14px] ml-[26px]" viewBox="0 0 14 14"><path d="M.5 1v2h9V1M.5 13v-2h9v2M.5 5h9v4.500h-9zM12.500 1v12" fill="none" stroke="#ddd"/><rect x="11.500" y="4" width="2" height="2.500" fill="#eee"/></svg>
  <svg class="size-[20px] ml-[26px]" viewBox="0 0 20 20"><path d="M16.500 13.800A6.600 6.600 0 1 1 17 10.600H6" fill="none" stroke="#5cc6f2" stroke-width="3.200"/><path d="M2 18.500C-.5 16 4 8 10.500 3.500 14 1 18 .3 18.800 2.200c.4 1 0 2.200-.5 3.300" fill="none" stroke="#f3d047" stroke-width="1.500"/></svg>
  <svg class="w-[18px] h-[16px] ml-[21px]" viewBox="0 0 18 16"><path d="M0 1.500h6l1.500 1.500H18v12H0z" fill="#f3cf6d"/><path d="M0 5h18v10H0z" fill="#fbe08e"/><path d="M3.500 8.500h11V15H12v-3H6v3H3.500z" fill="#4aa7cf"/></svg>
  <div class="ml-[12px] w-[40px] h-[33px] bg-[#35393b] border-b-2 border-[#7fb5dc] flex items-center justify-center"><svg class="size-[20px] mt-px" viewBox="0 0 20 20"><circle cx="10" cy="10" r="9.700" fill="#1684d4"/><path d="M.5 8.500C1.500 3.500 5.500 .3 10 .3c6 0 9.700 4.200 9.700 8.200 0 3-2.300 4.700-4.700 4.700-2.300 0-3.300-1-2.500-2 1-1.700.3-4.700-3.500-5.200C5 5.500 1.500 7.500.5 8.500z" fill="#3fc6a4"/><path d="M12 .6c5 1 7.700 4.600 7.700 8 0 3-2.300 4.600-4.700 4.600-2.300 0-3.300-1-2.500-2 2-3-.5-8-.5-10.600z" fill="#66cf54"/><path d="M7.500 8.500c-1.500 4 1.500 9 7 8.800 1.500 0 3-.6 3.800-1.300-2 2.800-5.300 4-8.300 3.700C5 19 3.500 12 7.500 8.500z" fill="#0d4f9c"/></svg></div>
  <svg class="w-[10px] h-[6px] ml-auto" viewBox="0 0 10 6"><path d="M.6 5.400L5 1l4.400 4.400" fill="none" stroke="#eee" stroke-width="1.100"/></svg>
  <svg class="w-[14px] h-[13px] ml-[28px]" viewBox="0 0 14 13"><path d="M3.500 1.500h9.800v7H4.500M1 1h2.500v3.500H1zM2.300 4.500V12h5" fill="none" stroke="#ddd"/><path d="M9.300 5.500l4 7h-8z" fill="#f2b52c"/><path d="M9.300 8v2.300M9.300 11v.8" stroke="#222" stroke-width=".9"/></svg>
  <span class="ml-[8px] w-[19px] tracking-[-0.400px]">ENG</span>
  <div class="ml-[11px] w-[50px] text-center leading-[15px] tracking-[-0.480px]"><p>09:30</p><p>07/03/2023</p></div>
  <svg class="w-[14px] h-[14px] ml-[13px] mr-[17px]" viewBox="0 0 14 14"><path d="M.6 1h12.800v9.500H9L7 12.800 5 10.500H.6z" fill="none" stroke="#ddd" stroke-width="1.100"/></svg>
  <i class="w-px h-full bg-[#3a3a3a] mr-[3px]"></i>
</div>
<div class="h-[2px] shrink-0 bg-[#cfdae3]"></div>

<!-- Mouse pointer -->
<svg class="absolute left-[89px] top-[19px] w-[9px] h-[14px] z-20" viewBox="0 0 9 14"><path d="M.8 .8v10.400l2.500-2.200 1.600 3.800 1.600-.7-1.600-3.600h3.300z" fill="#fff" stroke="#222" stroke-width=".4"/></svg>
</body>
</html>
